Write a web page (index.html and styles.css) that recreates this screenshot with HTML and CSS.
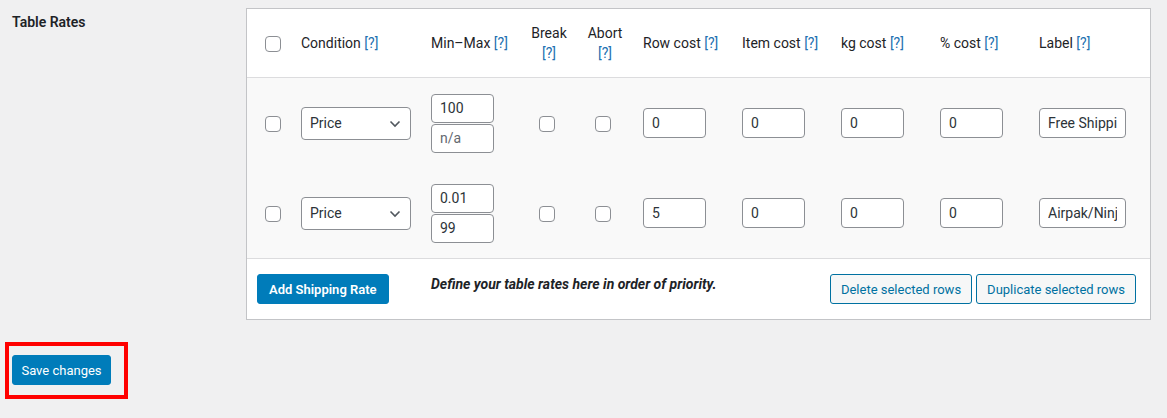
FILE: index.html
```
<!DOCTYPE html>
<html lang="en">

<head>
    <meta charset="UTF-8">
    <meta name="viewport" content="width=device-width, initial-scale=1.0">
    <title>Table Rates</title>
    <link rel="stylesheet" href="styles.css">
</head>

<body>
    <div class="page">
        <div class="setting">
            <div class="setting-label">Table Rates</div>

            <div class="rates-box">
                <table class="rates">
                    <colgroup>
                        <col style="width:44px">
                        <col style="width:130px">
                        <col style="width:100px">
                        <col style="width:56px">
                        <col style="width:56px">
                        <col style="width:99px">
                        <col style="width:99px">
                        <col style="width:99px">
                        <col style="width:99px">
                        <col>
                    </colgroup>
                    <thead>
                        <tr>
                            <th class="check"><input type="checkbox"></th>
                            <th>Condition <a class="tip">[?]</a></th>
                            <th>Min–Max <a class="tip">[?]</a></th>
                            <th class="center">Break<br><a class="tip">[?]</a></th>
                            <th class="center">Abort<br><a class="tip">[?]</a></th>
                            <th>Row cost <a class="tip">[?]</a></th>
                            <th>Item cost <a class="tip">[?]</a></th>
                            <th>kg cost <a class="tip">[?]</a></th>
                            <th>% cost <a class="tip">[?]</a></th>
                            <th>Label <a class="tip">[?]</a></th>
                        </tr>
                    </thead>
                    <tbody>
                        <tr>
                            <td class="check"><input type="checkbox"></td>
                            <td>
                                <span class="select-wrap">
                                    <select>
                                        <option>Price</option>
                                    </select>
                                    <svg class="chevron" width="12" height="8" viewBox="0 0 12 8"><polyline points="1.5,1.5 6,6 10.5,1.5" fill="none" stroke="#50575e" stroke-width="1.6"/></svg>
                                </span>
                            </td>
                            <td>
                                <div class="minmax">
                                    <input type="text" class="small" value="100">
                                    <input type="text" class="small" placeholder="n/a">
                                </div>
                            </td>
                            <td class="center flag"><input type="checkbox"></td>
                            <td class="center flag"><input type="checkbox"></td>
                            <td><input type="text" class="small" value="0"></td>
                            <td><input type="text" class="small" value="0"></td>
                            <td><input type="text" class="small" value="0"></td>
                            <td><input type="text" class="small" value="0"></td>
                            <td><input type="text" class="label-input" value="Free Shipping"></td>
                        </tr>
                        <tr>
                            <td class="check"><input type="checkbox"></td>
                            <td>
                                <span class="select-wrap">
                                    <select>
                                        <option>Price</option>
                                    </select>
                                    <svg class="chevron" width="12" height="8" viewBox="0 0 12 8"><polyline points="1.5,1.5 6,6 10.5,1.5" fill="none" stroke="#50575e" stroke-width="1.6"/></svg>
                                </span>
                            </td>
                            <td>
                                <div class="minmax">
                                    <input type="text" class="small" value="0.01">
                                    <input type="text" class="small" value="99">
                                </div>
                            </td>
                            <td class="center flag"><input type="checkbox"></td>
                            <td class="center flag"><input type="checkbox"></td>
                            <td><input type="text" class="small" value="5"></td>
                            <td><input type="text" class="small" value="0"></td>
                            <td><input type="text" class="small" value="0"></td>
                            <td><input type="text" class="small" value="0"></td>
                            <td><input type="text" class="label-input" value="Airpak/Ninja"></td>
                        </tr>
                    </tbody>
                    <tfoot>
                        <tr>
                            <th colspan="2"><button class="button primary bold">Add Shipping Rate</button></th>
                            <td colspan="8">
                                <div class="foot-bar">
                                    <p class="hint">Define your table rates here in order of priority.</p>
                                    <div class="foot-actions">
                                        <button class="button secondary">Delete selected rows</button>
                                        <button class="button secondary">Duplicate selected rows</button>
                                    </div>
                                </div>
                            </td>
                        </tr>
                    </tfoot>
                </table>
            </div>
        </div>

        <div class="save-mark">
            <button class="button primary">Save changes</button>
        </div>
    </div>
</body>

</html>
```

FILE: styles.css
```
body {
    margin: 0;
    background: #f0f0f1;
    color: #1d2327;
    font-family: Roboto, "Noto Sans", "Liberation Sans", sans-serif;
    font-size: 14px;
}

.page {
    padding: 8px 16px 0 0;
}

.setting {
    display: flex;
    align-items: flex-start;
}

.setting-label {
    width: 246px;
    flex-shrink: 0;
    padding-left: 12px;
    box-sizing: border-box;
    margin-top: 4px;
    line-height: 20px;
    font-weight: 600;
}

.rates-box {
    width: 905px;
    flex-shrink: 0;
    border: 1px solid #c3c4c7;
    box-sizing: border-box;
    background: #fff;
}

.rates {
    width: 100%;
    border-collapse: collapse;
    table-layout: fixed;
}

.rates th,
.rates td {
    padding: 0 10px;
    text-align: left;
    vertical-align: middle;
}

.rates thead th {
    height: 68px;
    font-weight: 400;
    line-height: 20px;
    border-bottom: 1px solid #dcdcde;
    white-space: nowrap;
}

.rates .center {
    text-align: center;
    padding: 0;
}

.rates .flag {
    padding-right: 5px;
}

.rates .check {
    padding-left: 18px;
}

.tip {
    color: #2271b1;
    font-weight: 400;
}

.rates tbody tr {
    background: #f9f9f9;
}

.rates tbody td {
    height: 90px;
    padding-top: 0;
    padding-bottom: 0;
}

.rates tbody tr:last-child td {
    border-bottom: 1px solid #dcdcde;
}

input[type="checkbox"] {
    appearance: none;
    width: 16px;
    height: 16px;
    margin: 0;
    border: 1px solid #8c8f94;
    border-radius: 4px;
    background: #fff;
    vertical-align: middle;
}

input[type="text"] {
    box-sizing: border-box;
    height: 30px;
    margin: 0;
    padding: 0 8px;
    border: 1px solid #8c8f94;
    border-radius: 4px;
    background: #fff;
    color: #2c3338;
    font-family: inherit;
    font-size: 14px;
    display: block;
}

input::placeholder {
    color: #646970;
}

.small {
    width: 63px;
}

.label-input {
    width: 87px;
}

.minmax {
    display: flex;
    flex-direction: column;
    gap: 1px;
}

.minmax input {
    height: 29px;
}

.select-wrap {
    position: relative;
    display: inline-block;
    vertical-align: middle;
}

select {
    appearance: none;
    width: 110px;
    height: 33px;
    padding: 0 24px 0 8px;
    border: 1px solid #8c8f94;
    border-radius: 4px;
    background: #fff;
    color: #2c3338;
    font-family: inherit;
    font-size: 14px;
    display: block;
}

.chevron {
    position: absolute;
    right: 10px;
    top: 13px;
    pointer-events: none;
}

.rates tfoot th,
.rates tfoot td {
    height: 60px;
    background: #fff;
}

.foot-bar {
    display: flex;
    align-items: center;
}

.hint {
    margin: 0 0 10px 0;
    font-size: 14px;
    font-weight: 700;
    font-style: italic;
}

.foot-actions {
    margin-left: auto;
    margin-right: 4px;
    display: flex;
    gap: 4px;
}

.button {
    height: 30px;
    padding: 0 10px;
    border-radius: 3px;
    font-family: inherit;
    font-size: 13px;
    cursor: pointer;
}

.primary {
    background: #007cba;
    border: 1px solid #007cba;
    color: #fff;
}

.bold {
    font-weight: 600;
    padding: 0 11px;
}

.secondary {
    background: #f6f7f7;
    border: 1px solid #0071a1;
    color: #0071a1;
}

.save-mark {
    display: inline-block;
    margin: 22px 0 0 5px;
    padding: 9px 13px 10px 3px;
    border: 4px solid #ff0000;
}

.save-mark .button {
    display: block;
    width: 99px;
    padding: 0;
}
```
